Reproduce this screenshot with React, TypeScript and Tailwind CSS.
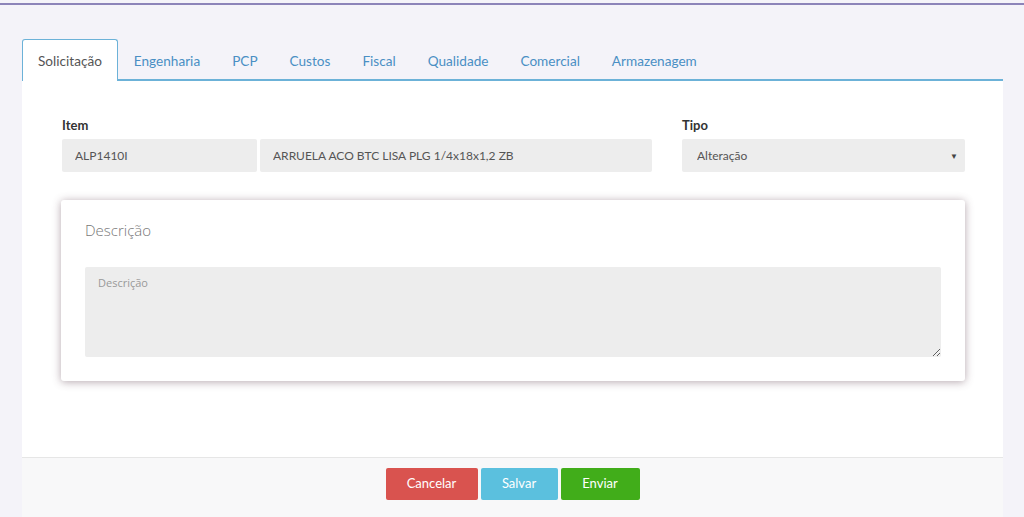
import { useState } from "react"

const tabs = ["Solicitação", "Engenharia", "PCP", "Custos", "Fiscal", "Qualidade", "Comercial", "Armazenagem"]

export default function App() {
    const [active, setActive] = useState("Solicitação")
    const [tipo, setTipo] = useState("Alteração")

    return (
        <div className="min-h-screen bg-[#f4f3f9] font-['Lato',sans-serif] text-[#333]">
            <div className="h-[3px]" />
            <div className="h-[2px] bg-[#8c84b9]" />

            <div className="pl-[22px] pr-[21px] pt-[35px]">
                {/* tabs */}
                <div className="flex h-[41px] items-end border-b-2 border-[#6cb2d8]">
                    {tabs.map(t => (
                        <button
                            key={t}
                            onClick={() => setActive(t)}
                            className={`-mb-[2px] h-[42px] px-[15px] pt-[2px] text-[13.6px] ${active === t ? 'rounded-t-[3px] border border-b-0 border-[#6cb2d8] bg-white text-[#555]' : 'border border-transparent text-[#4a8fc4]'}`}>
                            {t}
                        </button>
                    ))}
                </div>

                {/* body */}
                <div className="bg-white pb-[76px] pl-10 pr-[38px] pt-[36px]">
                    <div className="flex gap-[30px]">
                        <div className="flex flex-1 flex-col">
                            <label className="mb-[6px] text-[13px] font-bold leading-4">Item</label>
                            <div className="flex gap-[3px]">
                                <input readOnly value="ALP1410I" className="h-[33px] w-[195px] rounded-[2px] bg-[#ededed] px-[13px] text-[12px] text-[#555] outline-none" />
                                <input readOnly value="ARRUELA ACO BTC LISA PLG 1/4x18x1,2 ZB" className="h-[33px] flex-1 rounded-[2px] bg-[#ededed] px-[13px] text-[12px] text-[#555] outline-none" />
                            </div>
                        </div>
                        <div className="flex w-[283px] flex-col">
                            <label className="mb-[6px] text-[13px] font-bold leading-4">Tipo</label>
                            <div className="relative">
                                <select
                                    value={tipo}
                                    onChange={e => setTipo(e.target.value)}
                                    className="h-[33px] w-full appearance-none rounded-[2px] bg-[#ededed] px-[15px] text-[12px] text-[#555] outline-none">
                                    <option>Alteração</option>
                                    <option>Inclusão</option>
                                    <option>Exclusão</option>
                                </select>
                                <span className="pointer-events-none absolute right-[7px] top-[11px] text-[8px] text-[#444]">▼</span>
                            </div>
                        </div>
                    </div>

                    {/* descricao card */}
                    <div className="ml-[-1px] mt-[28px] rounded-[3px] bg-white px-6 pb-6 pt-[18px] shadow-[0_1px_8px_rgba(90,60,75,0.45)]">
                        <h3 className="font-['Open_Sans',sans-serif] text-[15px] font-light leading-6 text-[#777]">Descrição</h3>
                        <textarea
                            placeholder="Descrição"
                            className="mt-[25px] block h-[90px] w-full rounded-[2px] bg-[#ededed] px-[13px] py-[8px] font-['Open_Sans',sans-serif] text-[11px] text-[#555] placeholder:text-[#999] outline-none" />
                    </div>
                </div>

                {/* footer */}
                <div className="flex h-[60px] justify-center gap-[3px] border-t border-[#e6e6e6] bg-[#f8f8f9] pt-[10px]">
                    <button className="h-8 w-[92px] rounded-[2px] bg-[#d9534f] text-[13px] text-white">Cancelar</button>
                    <button className="h-8 w-[77px] rounded-[2px] bg-[#5bc0de] text-[13px] text-white">Salvar</button>
                    <button className="h-8 w-[79px] rounded-[2px] bg-[#41ad1a] text-[13px] text-white">Enviar</button>
                </div>
            </div>
        </div>
    )
}
